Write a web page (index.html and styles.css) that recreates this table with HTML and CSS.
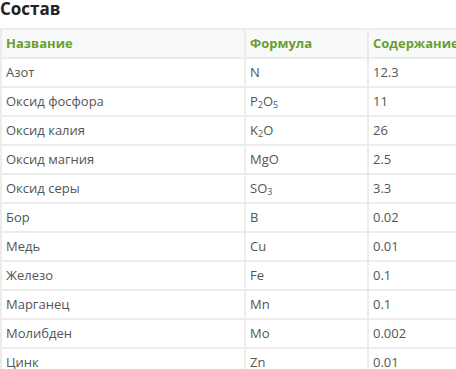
FILE: index.html
```html
<!DOCTYPE html>
<html lang="ru">
<head>
<meta charset="utf-8">
<link rel="stylesheet" href="styles.css">
</head>
<body>
<h2 class="title">Состав</h2>
<table class="comp">
<thead>
<tr><th class="c1">Название</th><th class="c2">Формула</th><th class="c3">Содержание</th></tr>
</thead>
<tbody>
<tr><td>Азот</td><td>N</td><td>12.3</td></tr>
<tr><td>Оксид фосфора</td><td>P<sub>2</sub>O<sub>5</sub></td><td>11</td></tr>
<tr><td>Оксид калия</td><td>K<sub>2</sub>O</td><td>26</td></tr>
<tr><td>Оксид магния</td><td>MgO</td><td>2.5</td></tr>
<tr><td>Оксид серы</td><td>SO<sub>3</sub></td><td>3.3</td></tr>
<tr><td>Бор</td><td>B</td><td>0.02</td></tr>
<tr><td>Медь</td><td>Cu</td><td>0.01</td></tr>
<tr><td>Железо</td><td>Fe</td><td>0.1</td></tr>
<tr><td>Марганец</td><td>Mn</td><td>0.1</td></tr>
<tr><td>Молибден</td><td>Mo</td><td>0.002</td></tr>
<tr><td>Цинк</td><td>Zn</td><td>0.01</td></tr>
</tbody>
</table>
</body>
</html>
```
FILE: styles.css
```css
html, body {
  margin: 0;
  padding: 0;
  background: #fff;
  font-family: "Open Sans", sans-serif;
  overflow: hidden;
}
.title {
  margin: 0 0 10px 0;
  font-size: 17px;
  font-weight: 700;
  line-height: 18px;
  color: #222;
}
.comp {
  border-collapse: collapse;
  table-layout: fixed;
  width: 480px;
  font-size: 13px;
  color: #555;
}
.comp th, .comp td {
  border: 2px solid #ececec;
  padding: 5px 4px;
  height: 17px;
  line-height: 17px;
  text-align: left;
  vertical-align: middle;
  white-space: nowrap;
}
.comp th {
  background: #f8f9f9;
  color: #6a9e2f;
  font-weight: 700;
}
.comp .c1 { width: 234px; }
.comp .c2 { width: 113px; }
.comp sub {
  font-size: 9px;
  line-height: 0;
  vertical-align: -2px;
}
```
